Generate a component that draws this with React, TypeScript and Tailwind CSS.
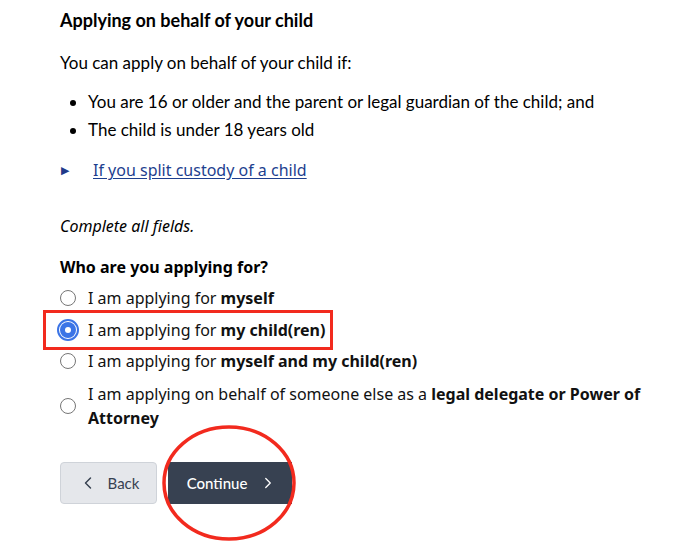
import { ChevronLeft, ChevronRight } from 'lucide-react';

const lato = "font-['Lato',sans-serif]";
const noto = "font-['Noto_Sans',sans-serif]";

function Radio({ checked, children }: { checked?: boolean; children: React.ReactNode }) {
  return (
    <label className="flex items-center gap-3">
      {checked ? (
        <span className="-m-[3px] flex h-[22px] w-[22px] shrink-0 items-center justify-center rounded-full border-2 border-[#3b74e6] p-[1px]">
          <span className="flex h-full w-full items-center justify-center rounded-full bg-[#3b74e6]">
            <span className="h-1.5 w-1.5 rounded-full bg-white" />
          </span>
        </span>
      ) : (
        <span className="h-4 w-4 shrink-0 rounded-full border border-[#767676] bg-white" />
      )}
      <span className="text-[16px] leading-6 text-[#111]">{children}</span>
    </label>
  );
}

export default function App() {
  return (
    <div className={`relative min-h-[560px] bg-white pl-[60px] pr-8 pt-[8px] text-black ${lato}`}>
      <h2 className="text-[18px] font-bold leading-6">Applying on behalf of your child</h2>
      <p className="mt-[19px] text-[17px] leading-6">You can apply on behalf of your child if:</p>
      <ul className="mt-[15px] space-y-1 pl-7 text-[17px] leading-6">
        <li className="list-disc">You are 16 or older and the parent or legal guardian of the child; and</li>
        <li className="list-disc">The child is under 18 years old</li>
      </ul>

      <div className={`mt-[16px] flex items-center ${noto}`}>
        <span className="ml-[1px] w-[32px] text-[11px] text-[#1f3a8a]">▶</span>
        <a href="#" className="text-[16px] leading-6 text-[#1e3f8f] underline underline-offset-2">
          If you split custody of a child
        </a>
      </div>

      <div className={noto}>
        <p className="mt-[32px] text-[16px] italic leading-6">Complete all fields.</p>
        <p className="mt-[17px] text-[16px] font-bold leading-6">Who are you applying for?</p>

        <div className="mt-[7px] flex flex-col">
          <Radio>
            I am applying for <b>myself</b>
          </Radio>
          <div className="-ml-[17px] w-[290px] border-[3px] border-[#f22a1e] py-[5px] pl-[14px]">
            <Radio checked>
              I am applying for <b>my child(ren)</b>
            </Radio>
          </div>
          <div className="-mt-[1px]">
            <Radio>
              I am applying for <b>myself and my child(ren)</b>
            </Radio>
          </div>
          <div className="mt-[9px]">
            <Radio>
              I am applying on behalf of someone else as a <b>legal delegate or Power of Attorney</b>
            </Radio>
          </div>
        </div>
      </div>

      <div className="mt-[32px] flex gap-[11px]">
        <button className="flex h-[42px] w-[97px] items-center justify-center gap-[10px] rounded border border-[#cfd3d9] bg-[#e5e7eb] text-[15px] text-[#374151]">
          <ChevronLeft size={20} strokeWidth={1.75} />
          Back
        </button>
        <div className="relative">
          <button className="flex h-[42px] w-[124px] items-center justify-center gap-3 bg-[#374151] pl-1 text-[15px] font-medium text-white">
            Continue
            <ChevronRight size={18} strokeWidth={1.75} />
          </button>
          <svg className="pointer-events-none absolute -left-[7px] -top-[38px]" width="136" height="118" viewBox="0 0 136 118">
            <ellipse cx="68" cy="59" rx="65" ry="56" fill="none" stroke="#f22a1e" strokeWidth="3.5" />
          </svg>
        </div>
      </div>
    </div>
  );
}
